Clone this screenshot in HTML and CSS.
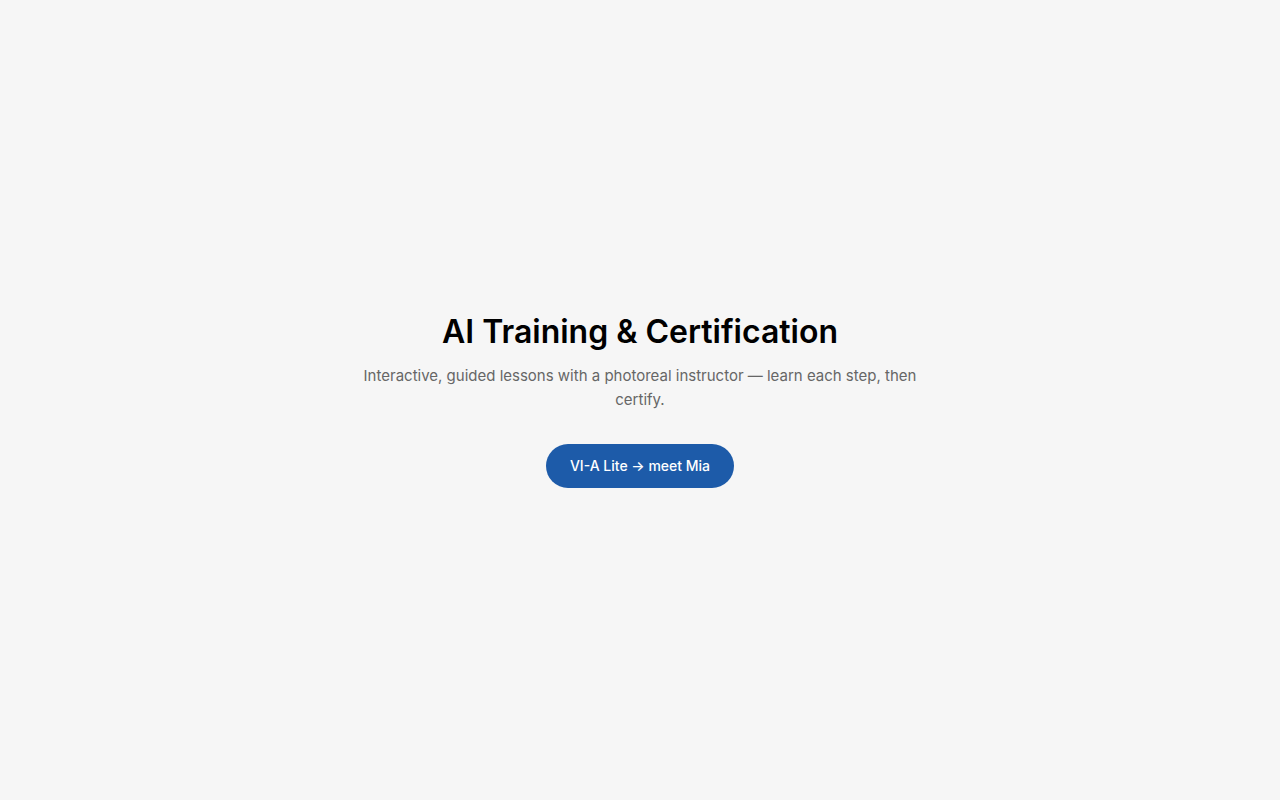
FILE: index.html
```html
<!DOCTYPE html>
<html lang="en">
<head>
    <meta charset="UTF-8" />
    <meta name="viewport" content="width=device-width, initial-scale=1.0" />
    <title>AI Training &amp; Certification</title>
    <link rel="stylesheet" href="styles.css">
</head>
<body>
<main class="hero">
    <h1 class="hero-title">AI Training &amp; Certification</h1>
    <p class="hero-text">Interactive, guided lessons with a photoreal instructor — learn each step, then certify.</p>
    <a class="hero-btn" href="#">VI-A Lite → meet Mia</a>
</main>
</body>
</html>
```

FILE: styles.css
```css
* {
    margin: 0;
    padding: 0;
    box-sizing: border-box;
}

body {
    min-height: 100vh;
    display: flex;
    align-items: center;
    justify-content: center;
    background: #f6f6f6;
    color: #000;
    font-family: Inter, "Liberation Sans", sans-serif;
}

.hero {
    max-width: 640px;
    padding: 32px;
    text-align: center;
}

.hero-title {
    margin-bottom: 12px;
    font-size: 32px;
    font-weight: 600;
    line-height: 40px;
}

.hero-text {
    margin-bottom: 32px;
    color: #666;
    font-size: 15px;
    line-height: 24px;
}

.hero-btn {
    display: inline-block;
    padding: 12px 24px;
    border-radius: 22px;
    background: #1d5ba9;
    color: #fff;
    font-size: 14px;
    font-weight: 500;
    line-height: 20px;
    text-decoration: none;
}
```
